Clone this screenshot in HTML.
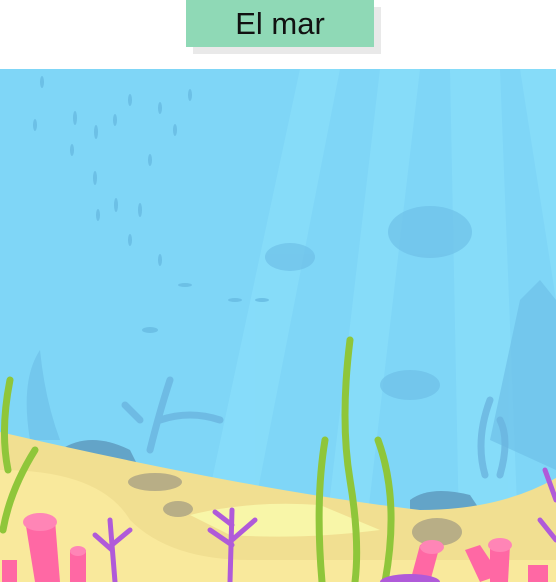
<!DOCTYPE html>
<html><head><style>
html,body{margin:0;padding:0;background:#fff;width:556px;height:582px;overflow:hidden;position:relative}
.sh{position:absolute;left:193px;top:7px;width:188px;height:47px;background:#e9e9e9}
.tt{position:absolute;left:186px;top:0;width:188px;height:47px;background:#8fd9b6;font:31px "Liberation Sans",sans-serif;color:#111;text-align:center;line-height:48px}
svg{position:absolute;left:0;top:69px}
</style></head><body>
<div class="sh"></div><div class="tt">El mar</div>
<svg width="556" height="513" viewBox="0 69 556 513">
<rect x="0" y="69" width="556" height="513" fill="#7fd6f7"/>
<g fill="#8be0fb" opacity="0.6">
<polygon points="300,69 340,69 240,582 190,582"/>
<polygon points="380,69 420,69 360,582 320,582"/>
<polygon points="450,69 500,69 520,582 460,582"/>
<polygon points="520,69 556,69 556,300"/>
</g>
<g fill="#6ec0e8" opacity="0.7">
<ellipse cx="430" cy="232" rx="42" ry="26"/>
<ellipse cx="290" cy="257" rx="25" ry="14"/>
<ellipse cx="410" cy="385" rx="30" ry="15"/>
<path d="M490 440 L520 300 L540 280 L556 300 L556 470Z"/>
<path d="M30 440 Q20 380 40 350 Q45 400 60 440Z"/>
</g>
<g fill="#6cc0e6">
<ellipse cx="42" cy="82" rx="2" ry="6"/><ellipse cx="75" cy="118" rx="2" ry="7"/><ellipse cx="96" cy="132" rx="2" ry="7"/>
<ellipse cx="72" cy="150" rx="2" ry="6"/><ellipse cx="95" cy="178" rx="2" ry="7"/><ellipse cx="116" cy="205" rx="2" ry="7"/>
<ellipse cx="140" cy="210" rx="2" ry="7"/><ellipse cx="98" cy="215" rx="2" ry="6"/><ellipse cx="130" cy="240" rx="2" ry="6"/>
<ellipse cx="160" cy="260" rx="2" ry="6"/><ellipse cx="130" cy="100" rx="2" ry="6"/><ellipse cx="160" cy="108" rx="2" ry="6"/>
<ellipse cx="190" cy="95" rx="2" ry="6"/><ellipse cx="150" cy="160" rx="2" ry="6"/><ellipse cx="175" cy="130" rx="2" ry="6"/>
<ellipse cx="235" cy="300" rx="7" ry="2"/><ellipse cx="262" cy="300" rx="7" ry="2"/><ellipse cx="150" cy="330" rx="8" ry="3"/>
<ellipse cx="185" cy="285" rx="7" ry="2"/><ellipse cx="35" cy="125" rx="2" ry="6"/><ellipse cx="115" cy="120" rx="2" ry="6"/>
</g>
<g stroke="#6ab4de" stroke-width="7" fill="none" stroke-linecap="round" opacity="0.8">
<path d="M150 450 Q160 410 170 380 M160 420 Q190 410 220 420 M140 420 Q130 410 125 405"/>
<path d="M485 475 Q475 440 490 400 M500 475 Q510 440 500 420"/>
</g>
<path d="M60 450 Q90 430 130 450 L140 470 L60 470Z" fill="#63a4c8"/>
<path d="M410 500 Q430 485 470 495 L480 510 L410 510Z" fill="#63a4c8"/>
<path d="M0 432 Q250 490 420 510 Q500 510 556 478 L556 582 L0 582Z" fill="#f1df91"/>
<path d="M0 470 Q100 470 130 520 Q170 560 250 560 L556 560 L556 582 L0 582Z" fill="#f9e99c"/>
<path d="M190 515 Q250 500 320 505 L380 530 Q300 540 230 535Z" fill="#f8f6a8"/>
<ellipse cx="155" cy="482" rx="27" ry="9" fill="#b8ae86"/>
<ellipse cx="178" cy="509" rx="15" ry="8" fill="#b8ae86"/>
<ellipse cx="437" cy="532" rx="25" ry="14" fill="#b8ae86"/>
<g stroke="#8fc63a" stroke-width="7" fill="none" stroke-linecap="round">
<path d="M350 340 Q340 420 350 480 Q360 540 355 582"/>
<path d="M325 440 Q315 500 322 582"/>
<path d="M378 440 Q400 500 385 582"/>
<path d="M10 380 Q0 430 8 470 M35 450 Q10 490 3 530"/>
</g>
<g stroke="#b05ad9" stroke-width="5" fill="none" stroke-linecap="round">
<path d="M230 582 L232 510 M232 545 L210 530 M232 540 L255 520 M232 525 L215 512"/>
<path d="M115 582 L110 520 M112 550 L95 535 M112 545 L130 530"/>
<path d="M540 520 L556 540 M545 470 L556 500"/>
</g>
<g fill="#ff68a4">
<path d="M25 520 L55 520 L60 582 L35 582Z"/><ellipse cx="40" cy="522" rx="17" ry="9" fill="#ff85b6"/>
<rect x="70" y="550" width="16" height="32"/><ellipse cx="78" cy="551" rx="8" ry="5" fill="#ff85b6"/>
<rect x="2" y="560" width="15" height="22"/>
<path d="M420 545 L440 545 L430 582 L410 582Z"/><ellipse cx="432" cy="547" rx="12" ry="7" fill="#ff85b6"/>
<path d="M490 545 L510 545 L508 582 L490 582Z"/><ellipse cx="500" cy="545" rx="12" ry="7" fill="#ff85b6"/>
<path d="M465 550 L480 545 L500 575 L480 582Z"/>
<rect x="528" y="565" width="20" height="17"/>
</g>
<ellipse cx="410" cy="582" rx="30" ry="8" fill="#b05ad9"/>
</svg>
</body></html>
